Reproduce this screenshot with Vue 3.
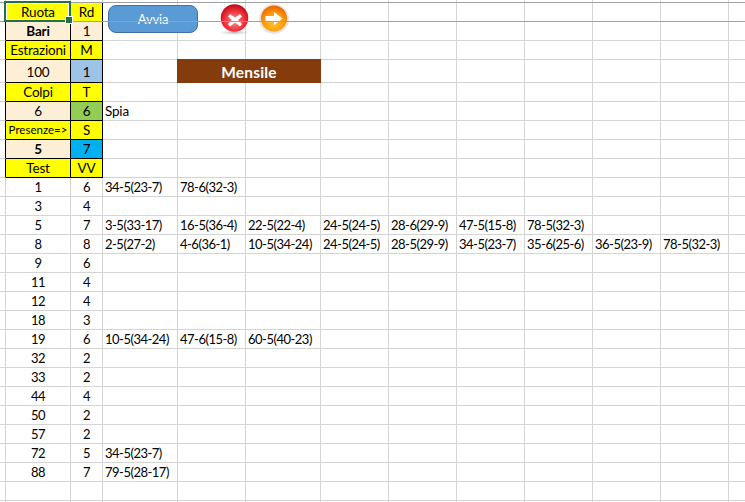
<script setup>
const y = 'yel', p = 'pea'
const head = [
  [['Ruota', y], ['Rd', y]],
  [['Bari', p + ' b'], ['1', p]],
  [['Estrazioni', y], ['M', y]],
  [['100', p], ['1', 'blu']],
  [['Colpi', y], ['T', y]],
  [['6', p], ['6', 'grn']],
  [['Presenze=>', y + ' sm'], ['S', y]],
  [['5', p + ' b'], ['7', 'cya']],
  [['Test', y], ['VV', y]]
]
const data = [
  ['1', '6', '34-5(23-7)', '78-6(32-3)'],
  ['3', '4'],
  ['5', '7', '3-5(33-17)', '16-5(36-4)', '22-5(22-4)', '24-5(24-5)', '28-6(29-9)', '47-5(15-8)', '78-5(32-3)'],
  ['8', '8', '2-5(27-2)', '4-6(36-1)', '10-5(34-24)', '24-5(24-5)', '28-5(29-9)', '34-5(23-7)', '35-6(25-6)', '36-5(23-9)', '78-5(32-3)'],
  ['9', '6'],
  ['11', '4'],
  ['12', '4'],
  ['18', '3'],
  ['19', '6', '10-5(34-24)', '47-6(15-8)', '60-5(40-23)'],
  ['32', '2'],
  ['33', '2'],
  ['44', '4'],
  ['50', '2'],
  ['57', '2'],
  ['72', '5', '34-5(23-7)'],
  ['88', '7', '79-5(28-17)'],
  ['', ''],
  ['', '']
]
const cols = 10
const extraCols = Array.from({ length: cols }, (_, i) => i)
</script>

<template>
  <div class="sheet">
    <div class="grid">
      <!-- top sliver row -->
      <div class="c"></div>
      <div v-for="n in 12" :key="'t' + n" class="c"></div>

      <!-- framed header rows -->
      <template v-for="(row, r) in head" :key="'h' + r">
        <div class="c gut-black" :class="{ tall: r === 3 }"></div>
        <div v-for="(cell, i) in row" :key="i" class="c mid black" :class="[cell[1], { tall: r === 3 }]">{{ cell[0] }}</div>
        <template v-if="r === 3">
          <div class="c tall"></div>
          <div class="c mensile">Mensile</div>
          <div v-for="n in 7" :key="n" class="c tall"></div>
        </template>
        <template v-else>
          <div class="c txt">{{ r === 5 ? 'Spia' : '' }}</div>
          <div v-for="n in 9" :key="n" class="c"></div>
        </template>
      </template>

      <!-- data rows -->
      <template v-for="(row, r) in data" :key="'d' + r">
        <div class="c"></div>
        <div class="c mid num">{{ row[0] }}</div>
        <div class="c mid num">{{ row[1] }}</div>
        <div v-for="i in extraCols" :key="i" class="c txt num">{{ row[i + 2] }}</div>
      </template>
    </div>

    <!-- floating shapes over the sheet -->
    <div class="btn">Avvia</div>

    <svg class="ico red" width="32" height="32" viewBox="0 0 32 32">
      <defs>
        <radialGradient id="rg" cx="50%" cy="60%" r="58%">
          <stop offset="0" stop-color="#ff8f8f" />
          <stop offset="0.6" stop-color="#f0363f" />
          <stop offset="1" stop-color="#c40a18" />
        </radialGradient>
        <radialGradient id="sh">
          <stop offset="0" stop-color="#999" stop-opacity="0.7" />
          <stop offset="1" stop-color="#bbb" stop-opacity="0" />
        </radialGradient>
      </defs>
      <ellipse cx="16.5" cy="28.5" rx="16" ry="2.6" fill="url(#sh)" />
      <circle cx="16.5" cy="14" r="13.8" fill="url(#rg)" />
      <path d="M12 10 17 13.5 22 10 24 12.5 20 16 24 20 22 22.5 17 18.5 12 22.5 10 20 14 16 10 12.5Z" fill="#fff" />
    </svg>

    <svg class="ico org" width="32" height="32" viewBox="0 0 32 32">
      <defs>
        <radialGradient id="og" cx="50%" cy="70%" r="65%">
          <stop offset="0" stop-color="#ffc02e" />
          <stop offset="0.6" stop-color="#ff9c0a" />
          <stop offset="1" stop-color="#ee6a00" />
        </radialGradient>
      </defs>
      <circle cx="16" cy="16" r="15" fill="#e4e4e4" />
      <circle cx="16" cy="15.5" r="13" fill="url(#og)" />
      <path d="M7.5 13H16V9L24.5 15.5 16 22V18H7.5Z" fill="#fff" />
    </svg>

    <div class="freeze f1"></div>
    <div class="freeze f2"></div>

    <div class="sel"><span class="handle"></span></div>
  </div>
</template>

<style>
html, body { margin: 0; background: #fff; overflow: hidden; }
</style>

<style scoped>
.sheet {
  position: relative;
  width: 745px;
  height: 502px;
  overflow: hidden;
  background: #fff;
  font-family: Lato, "Liberation Sans", sans-serif;
  font-size: 13.5px;
  letter-spacing: -0.2px;
  color: #000;
}
.grid {
  display: grid;
  grid-template-columns: 6px 65px 32px 75px 68px 75px 68px 68px 68px 68px 68px 68px 17px;
  grid-template-rows: 3px repeat(3, 19px) 23px repeat(23, 19px);
}
.c {
  box-sizing: border-box;
  border-right: 1px solid #d4d4d4;
  border-bottom: 1px solid #d4d4d4;
  min-width: 0;
  white-space: nowrap;
  line-height: 18px;
  overflow: visible;
}
.num { font-size: 13px; letter-spacing: -0.5px; }
.tall { line-height: 24px; }
.mid { text-align: center; }
.txt { padding-left: 2px; }
.black { border-color: #000; }
.gut-black { border-right-color: #000; }
.yel { background: #ffff00; }
.pea { background: #fdefd6; }
.blu { background: #9dc3e6; }
.grn { background: #92cd55; }
.cya { background: #00b0f0; }
.b { font-weight: 700; }
.sm { font-size: 11.5px; letter-spacing: 0; }
.mensile {
  grid-column: span 2;
  background: #843c0c;
  border-color: #843c0c;
  box-shadow: -1px 0 0 #843c0c, 0 -1px 0 #843c0c, -1px -1px 0 #843c0c;
  color: #fff;
  font-weight: 700;
  font-size: 15.5px;
  line-height: 24px;
  text-align: center;
  letter-spacing: 0.2px;
}
.btn {
  position: absolute;
  left: 108px;
  top: 5px;
  width: 90px;
  height: 28px;
  box-sizing: border-box;
  background: #5b9bd5;
  border: 1px solid #41719c;
  border-radius: 8px;
  color: #fff;
  font-size: 13px;
  line-height: 27px;
  text-align: center;
}
.ico { position: absolute; }
.red { left: 218px; top: 4px; }
.org { left: 258px; top: 3px; }
.freeze {
  position: absolute;
  left: 0;
  right: 0;
  height: 1px;
  background: #a0a0a0;
}
.f1 { top: 2px; }
.f2 { top: 21px; }
.sel {
  position: absolute;
  left: 4px;
  top: 1px;
  width: 67px;
  height: 21px;
  box-sizing: border-box;
  border: 2px solid #217346;
  box-shadow: inset 0 0 0 1px #fff;
}
.handle {
  position: absolute;
  right: -4px;
  bottom: -4px;
  width: 6px;
  height: 6px;
  background: #217346;
  border: 1px solid #fff;
}
</style>
